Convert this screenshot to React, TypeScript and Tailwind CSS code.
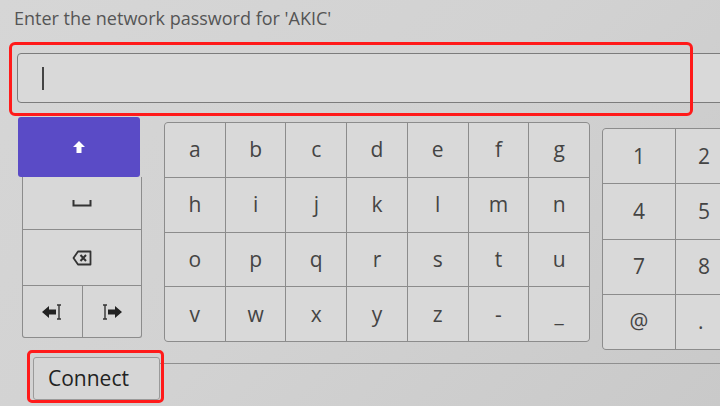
import React from "react";

const font = { fontFamily: '"Open Sans", "Noto Sans", sans-serif' };

function ShiftIcon() {
  return (
    <svg width="14" height="14" viewBox="0 0 14 14">
      <path d="M7 1 L13 7 L9.5 7 L9.5 13 L4.5 13 L4.5 7 L1 7 Z" fill="#fff" />
    </svg>
  );
}
function SpaceIcon() {
  return (
    <svg width="20" height="8" viewBox="0 0 20 8">
      <path d="M1.5 1 L1.5 6.5 L18.5 6.5 L18.5 1" fill="none" stroke="#333" strokeWidth="2" />
    </svg>
  );
}
function BackIcon() {
  return (
    <svg width="20" height="16" viewBox="0 0 20 16">
      <path d="M6 1.5 L18.5 1.5 L18.5 14.5 L6 14.5 L1.5 8 Z" fill="none" stroke="#333" strokeWidth="1.8" strokeLinejoin="round" />
      <path d="M8.5 5 L14 11 M14 5 L8.5 11" stroke="#333" strokeWidth="2" />
    </svg>
  );
}
function LeftIcon() {
  return (
    <svg width="22" height="18" viewBox="0 0 22 18">
      <path d="M1 9 L8 3 L8 6.5 L15 6.5 L15 11.5 L8 11.5 L8 15 Z" fill="#222" />
      <path d="M18 2 L18 16 M16 2 L20 2 M16 16 L20 16" stroke="#333" strokeWidth="1.4" fill="none" />
    </svg>
  );
}
function RightIcon() {
  return (
    <svg width="22" height="18" viewBox="0 0 22 18">
      <path d="M4 2 L4 16 M2 2 L6 2 M2 16 L6 16" stroke="#333" strokeWidth="1.4" fill="none" />
      <path d="M21 9 L14 3 L14 6.5 L7 6.5 L7 11.5 L14 11.5 L14 15 Z" fill="#222" />
    </svg>
  );
}

const letters = [
  ["a", "b", "c", "d", "e", "f", "g"],
  ["h", "i", "j", "k", "l", "m", "n"],
  ["o", "p", "q", "r", "s", "t", "u"],
  ["v", "w", "x", "y", "z", "-", "_"],
];
const nums = [
  ["1", "2"],
  ["4", "5"],
  ["7", "8"],
  ["@", "."],
];

export default function App() {
  return (
    <div
      className="relative w-[720px] h-[406px] overflow-hidden bg-[linear-gradient(135deg,#d6d6d6_0%,#d2d2d2_50%,#c9c9c9_100%)]"
      style={font}
    >
      {/* Title */}
      <div className="h-[42px] pl-[14px] pt-[7px] text-[18px] leading-[22px] text-[#555]">
        Enter the network password for 'AKIC'
      </div>

      {/* Input */}
      <div className="h-[75px] pt-[11px] pl-[17px]">
        <div className="h-[50px] w-[720px] rounded-[4px] border-[1.5px] border-[#7c7c7c] bg-[#d9d9d9] flex items-center pl-[24px]">
          <div className="w-[2px] h-[23px] bg-[#444]" />
        </div>
      </div>

      {/* Keyboard */}
      <div className="flex items-start h-[235px]">
        {/* left column */}
        <div className="ml-[18px] w-[122px] shrink-0 flex flex-col">
          <div className="h-[60px] rounded-[3px] bg-[#5a4bc6] flex items-center justify-center">
            <ShiftIcon />
          </div>
          <div className="ml-[4px] mr-[-2px] h-[161px] border border-[#8c8c8c] border-t-0 rounded-b-[3px] bg-[#8c8c8c] grid grid-rows-[52px_55px_1fr] gap-px overflow-hidden">
            <div className="bg-[#d8d8d8] flex items-center justify-center">
              <SpaceIcon />
            </div>
            <div className="bg-[#d8d8d8] flex items-center justify-center">
              <BackIcon />
            </div>
            <div className="grid grid-cols-2 gap-px">
              <div className="bg-[#d8d8d8] flex items-center justify-center">
                <LeftIcon />
              </div>
              <div className="bg-[#d8d8d8] flex items-center justify-center">
                <RightIcon />
              </div>
            </div>
          </div>
        </div>

        {/* letters */}
        <div className="ml-[24px] mt-[5px] w-[426px] shrink-0 h-[220px] border border-[#8c8c8c] rounded-[4px] bg-[#8c8c8c] grid grid-cols-7 grid-rows-4 gap-px overflow-hidden">
          {letters.flat().map((k, i) => (
            <div
              key={i}
              className="bg-[#d9d9d9] flex items-center justify-center text-[21px] text-[#444] leading-none"
            >
              {k}
            </div>
          ))}
        </div>

        {/* numbers */}
        <div className="ml-[12px] mt-[11px] w-[140px] shrink-0 h-[222px] border border-[#8c8c8c] rounded-[4px] bg-[#8c8c8c] grid grid-cols-[72px_1fr] grid-rows-4 gap-px overflow-hidden">
          {nums.flat().map((k, i) => (
            <div
              key={i}
              className={`bg-[#d9d9d9] flex items-center text-[21px] text-[#444] leading-none ${
                i % 2 === 0 ? "justify-center" : "pl-[22px]"
              }`}
            >
              {k}
            </div>
          ))}
        </div>
      </div>

      {/* Connect row */}
      <div className="flex items-start pt-[5px]">
        <div className="ml-[33px] w-[127px] shrink-0 h-[43px] border border-[#9a9a9a] rounded-[3px] bg-[#d6d6d6] flex items-center pl-[14px] text-[21px] text-[#222]">
          Connect
        </div>
        <div className="flex-1 h-[43px] border-t border-[#8f8f8f] mt-[6px]" />
      </div>

      {/* red annotations */}
      <div className="absolute left-[9px] top-[42px] w-[684px] h-[74px] border-[3px] border-[#ff1a1a] rounded-[6px]" />
      <div className="absolute left-[27px] top-[350px] w-[137px] h-[53px] border-[3px] border-[#ff1a1a] rounded-[5px]" />
    </div>
  );
}
